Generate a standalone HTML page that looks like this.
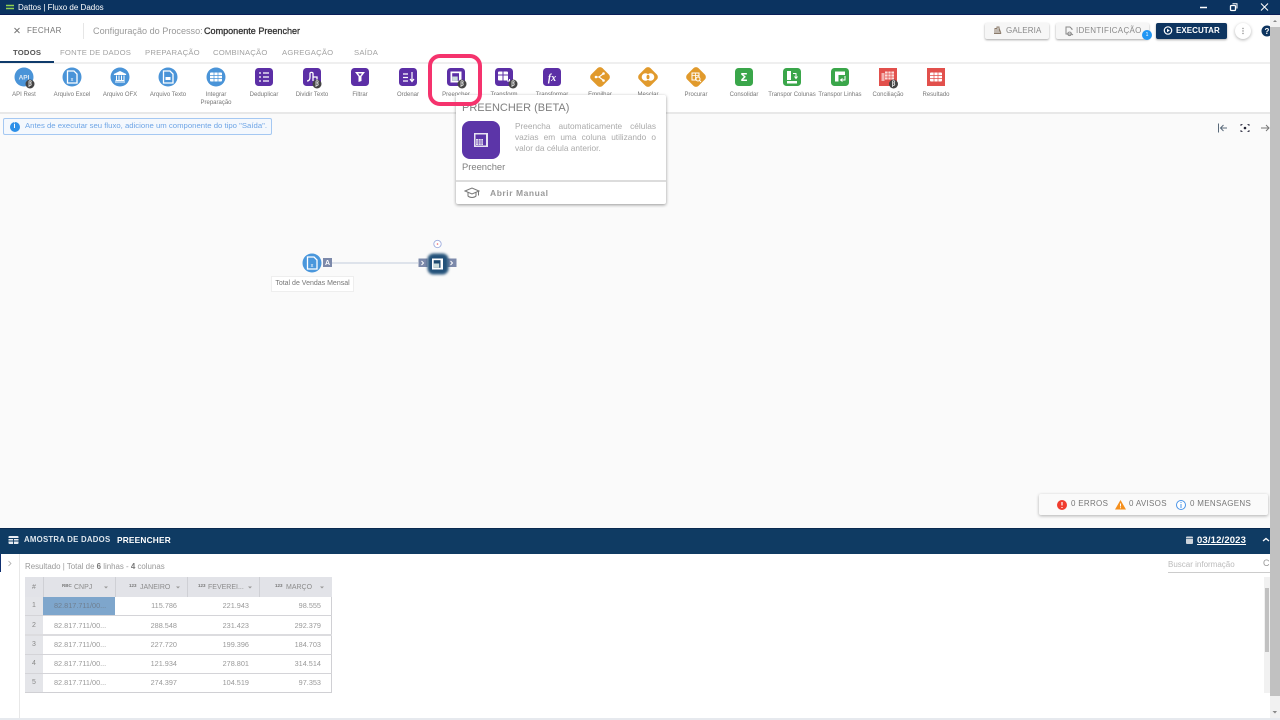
<!DOCTYPE html>
<html lang="pt"><head><meta charset="utf-8"><title>Dattos | Fluxo de Dados</title>
<style>
*{box-sizing:border-box}
html,body{margin:0;padding:0;width:1280px;height:720px;overflow:hidden;background:#fff;font-family:"Liberation Sans",sans-serif}
body{filter:blur(.3px)}
.a{position:absolute}
.t{position:absolute;white-space:nowrap;line-height:1}
.l{position:absolute;width:60px;text-align:center;font-size:6px;line-height:8px;color:#777;top:90.5px}
.tab{position:absolute;top:48px;font-size:7.7px;line-height:9px;letter-spacing:.2px;color:#a2a2a2;white-space:nowrap}
.btn{position:absolute;top:23px;height:16px;background:#f6f6f6;border-radius:2px;box-shadow:0 1px 2px rgba(0,0,0,.35);font-size:8px;line-height:16px;letter-spacing:.1px;color:#888;white-space:nowrap}
.r{text-align:right}
</style></head><body>
<div class="a" style="left:0;top:0;width:1280px;height:15px;background:#0b3360;border-bottom:1px solid #0a1e57"></div>
<div class="t" style="left:18px;top:3px;font-size:8px;line-height:10px;color:#fff">Dattos | Fluxo de Dados</div>

<div class="a" style="left:0;top:113px;width:1270px;height:415px;background:#fafafa"></div>
<div class="a" style="left:0;top:62px;width:1270px;height:2px;background:#efefef"></div>
<div class="a" style="left:0;top:61px;width:54px;height:2px;background:#0f3b6b"></div>
<div class="a" style="left:0;top:112px;width:1270px;height:2px;background:#e8e8e8"></div>

<div class="t" style="left:27px;top:27px;font-size:8px;letter-spacing:.3px;color:#777">FECHAR</div>
<div class="a" style="left:83px;top:23px;width:1px;height:16px;background:#e6e6e6"></div>
<div class="t" style="left:93px;top:26.500px;font-size:9.100px;color:#999">Configuração do Processo:</div>
<div class="t" style="left:204px;top:26.500px;font-size:9.050px;color:#333;-webkit-text-stroke:.3px #333">Componente Preencher</div>

<div class="tab" style="left:13px;color:#555;font-weight:bold">TODOS</div>
<div class="tab" style="left:60px">FONTE DE DADOS</div>
<div class="tab" style="left:145px">PREPARAÇÃO</div>
<div class="tab" style="left:213px">COMBINAÇÃO</div>
<div class="tab" style="left:282px">AGREGAÇÃO</div>
<div class="tab" style="left:354px">SAÍDA</div>

<div class="btn" style="left:985px;width:64px;padding-left:21px">GALERIA</div>
<div class="btn" style="left:1056px;width:93px;padding-left:20px;letter-spacing:.3px">IDENTIFICAÇÃO</div>
<div class="btn" style="left:1156px;width:71px;padding-left:20px;background:#0e3560;color:#fff;font-weight:bold;letter-spacing:.05px">EXECUTAR</div>
<div class="a" style="left:1235px;top:23px;width:16px;height:16px;border-radius:50%;background:#fff;box-shadow:0 1px 3px rgba(0,0,0,.3)"></div>
<div class="a" style="left:1142px;top:30px;width:10px;height:10px;border-radius:50%;background:#2196f3;color:#fff;font-size:5px;line-height:10px;text-align:center">1</div>

<div class="l" style="left:-6px">API Rest</div>
<div class="l" style="left:42px">Arquivo Excel</div>
<div class="l" style="left:90px">Arquivo OFX</div>
<div class="l" style="left:138px">Arquivo Texto</div>
<div class="l" style="left:186px">Integrar<br>Preparação</div>
<div class="l" style="left:234px">Deduplicar</div>
<div class="l" style="left:282px">Dividir Texto</div>
<div class="l" style="left:330px">Filtrar</div>
<div class="l" style="left:378px">Ordenar</div>
<div class="l" style="left:426px">Preencher</div>
<div class="l" style="left:474px">Transform</div>
<div class="l" style="left:522px">Transformar</div>
<div class="l" style="left:570px">Empilhar</div>
<div class="l" style="left:618px">Mesclar</div>
<div class="l" style="left:666px">Procurar</div>
<div class="l" style="left:714px">Consolidar</div>
<div class="l" style="left:762px">Transpor Colunas</div>
<div class="l" style="left:810px">Transpor Linhas</div>
<div class="l" style="left:858px">Conciliação</div>
<div class="l" style="left:906px">Resultado</div>

<svg class="a" style="left:0;top:0" width="1280" height="720" viewBox="0 0 1280 720">
<defs>
<g id="beta"><circle r="4.500" fill="#444"/><path d="M-1 3V-2.500C-1-3.600 1.200-3.600 1.200-2.200C1.200-1.300.2-1.200-.2-1.100C1.500-1 1.800 1.200 0 1.400H-1" fill="none" stroke="#ddd" stroke-width=".9"/></g>
<g id="doc"><path d="M-4.500-6H2L5-3V6H-4.500Z" fill="none" stroke="#fff" stroke-width="1.300"/></g>
<g id="grid"><rect x="-6" y="-4.500" width="12" height="9" rx="1" fill="#fff"/><path d="M-6-1.500H6M-6 1.500H6M-2-4.500V4.500M2-4.500V4.500" stroke="currentColor" stroke-width=".7"/></g>
<g id="fill"><rect x="-5.500" y="-5.500" width="11" height="11" fill="#fff"/><rect x="-3.800" y="-3.800" width="6.800" height="7.600" fill="currentColor"/><rect x="-3.800" y="-.5" width="5.500" height="4.300" fill="#cdd"/></g>
</defs>
<!-- title bar -->
<path d="M6 5.500H14M6 8.500H14" stroke="#8fd14f" stroke-width="1.500"/>
<path d="M1200 7.500H1207" stroke="#fff" stroke-width="1.500"/>
<rect x="1230.500" y="5.500" width="5" height="5" rx="1" fill="none" stroke="#fff" stroke-width="1.300"/><path d="M1232.500 3.800H1237V8.500" fill="none" stroke="#fff"/>
<path d="M1261 3.500L1268 10.500M1268 3.500L1261 10.500" stroke="#fff" stroke-width="1"/>
<path d="M14.500 28L19.500 33M19.500 28L14.500 33" stroke="#777" stroke-width="1"/>
<!-- buttons icons -->
<path d="M995 33.500V28.500H997V33.500M997 33.500V27H999V33.500M999 28L1001 33.500M994 33.500H1001" fill="none" stroke="#8a7a6a" stroke-width="1"/>
<path d="M1071 34H1066V27H1070L1072 29V30M1069.500 32a1.800 1.800 0 1 0 .1 0M1071 33.500L1073 35" fill="none" stroke="#888" stroke-width="1"/>
<circle cx="1168" cy="30.500" r="3.700" fill="none" stroke="#fff" stroke-width="1.200"/><path d="M1167 28.800L1169.800 30.500L1167 32.200Z" fill="#fff"/>
<circle cx="1243" cy="28.500" r=".7" fill="#888"/><circle cx="1243" cy="31" r=".7" fill="#888"/><circle cx="1243" cy="33.500" r=".7" fill="#888"/>
<circle cx="1267" cy="31" r="5.500" fill="#0e3560"/><text x="1267" y="34" font-size="8" font-weight="bold" fill="#fff" text-anchor="middle" font-family="Liberation Sans">?</text>

<!-- blue round icons -->
<g fill="#4a94d8">
<circle cx="24" cy="77" r="9.500"/><circle cx="72" cy="77" r="9.500"/><circle cx="120" cy="77" r="9.500"/><circle cx="168" cy="77" r="9.500"/><circle cx="216" cy="77" r="9.500"/>
</g>
<text x="24" y="79.500" font-size="6.500" font-weight="bold" fill="#dfeaf5" text-anchor="middle" font-family="Liberation Sans">API</text>
<use href="#doc" x="72" y="77"/><text x="72" y="81" font-size="5.500" fill="#fff" text-anchor="middle" font-family="Liberation Sans">x</text>
<path d="M114 74.500L120 71.500L126 74.500ZM115 82H125M115.500 80.500H124.500M116.500 75.500V80M119 75.500V80M121.500 75.500V80M124 75.500V80" fill="#fff" stroke="#fff" stroke-width="1"/>
<use href="#doc" x="168" y="77"/><rect x="165.500" y="77" width="5" height="3" fill="#fff"/>
<use href="#grid" x="216" y="77" color="#4a94d8"/>
<!-- purple -->
<g fill="#5c2fa6">
<rect x="255" y="68" width="18" height="18" rx="3.500"/><rect x="303" y="68" width="18" height="18" rx="3.500"/><rect x="351" y="68" width="18" height="18" rx="3.500"/><rect x="399" y="68" width="18" height="18" rx="3.500"/><rect x="447" y="68" width="18" height="18" rx="3.500"/><rect x="495" y="68" width="18" height="18" rx="3.500"/><rect x="543" y="68" width="18" height="18" rx="3.500"/>
</g>
<path d="M259 73H261M263 73H269M259 77H261M263 77H269M259 81H261M263 81H269" stroke="#fff" stroke-width="1.300"/>
<path d="M307 81C309 81 310 80 310 77V73.500C310 72 313 72 313 73.500V81M313 77H317V81" fill="none" stroke="#fff" stroke-width="1.300"/>
<path d="M355 72H365L361.500 76.500V81L358.500 82V76.500Z" fill="#fff"/><path d="M358 73.500H362L360 76Z" fill="#5c2fa6"/>
<path d="M403 74H408M403 77.500H408M403 81H408M412 72V81M410 79L412 81.500L414 79" fill="none" stroke="#fff" stroke-width="1.200"/>
<use href="#fill" x="456" y="77" color="#5c2fa6"/>
<g transform="translate(504,76)"><rect x="-6" y="-4.500" width="10" height="9" rx="1" fill="#fff"/><path d="M-6-1H4M-1-4.500V4.500" stroke="#5c2fa6"/><path d="M3 5H8M5.500 3V7" stroke="#fff"/></g>
<text x="552" y="81" font-size="10" font-style="italic" font-weight="bold" fill="#fff" text-anchor="middle" font-family="Liberation Serif">fx</text>
<use href="#beta" x="30" y="84"/><use href="#beta" x="317" y="84"/><use href="#beta" x="462" y="84"/><use href="#beta" x="513" y="84"/>
<!-- orange -->
<g fill="#e19a2c">
<rect x="592" y="69" width="16" height="16" rx="3.500" transform="rotate(45 600 77)"/><rect x="640" y="69" width="16" height="16" rx="3.500" transform="rotate(45 648 77)"/><rect x="688" y="69" width="16" height="16" rx="3.500" transform="rotate(45 696 77)"/>
</g>
<path d="M596 77H599L603 74M599 77L603 80" fill="none" stroke="#fff" stroke-width="1.100"/><circle cx="596" cy="77" r="1.300" fill="#fff"/><circle cx="603.500" cy="73.500" r="1.300" fill="#fff"/><circle cx="603.500" cy="80.500" r="1.300" fill="#fff"/>
<circle cx="645.500" cy="77" r="3.800" fill="#fff"/><circle cx="650.500" cy="77" r="3.800" fill="#fff"/><ellipse cx="648" cy="77" rx="1.500" ry="2.300" fill="#e19a2c"/>
<rect x="692" y="73" width="7" height="7" fill="none" stroke="#fff"/><path d="M692 75.500H699M695.500 73V80" stroke="#fff" stroke-width=".8"/><circle cx="698" cy="79" r="2" fill="#e19a2c" stroke="#fff"/><path d="M699.500 80.500L701 82" stroke="#fff"/>
<!-- green -->
<g fill="#3aa64a">
<rect x="735" y="68" width="18" height="18" rx="3.500"/><rect x="783" y="68" width="18" height="18" rx="3.500"/><rect x="831" y="68" width="18" height="18" rx="3.500"/>
</g>
<text x="744" y="81" font-size="11" font-weight="bold" fill="#fff" text-anchor="middle" font-family="DejaVu Sans">Σ</text>
<rect x="787" y="71" width="4" height="9" fill="#fff"/><rect x="787" y="81" width="10" height="2.500" fill="#fff"/><path d="M793 73.500H796V78M794.500 76.500L796 78.500L797.500 76.500" fill="none" stroke="#fff"/>
<rect x="835" y="71.500" width="10" height="3.500" fill="#fff"/><rect x="835" y="71.500" width="3.500" height="10" fill="#fff"/><path d="M845 76V80H841M842.500 78.500L840.500 80L842.500 81.500" fill="none" stroke="#fff"/>
<!-- red -->
<g fill="#e2504c">
<rect x="879" y="68" width="18" height="18"/><rect x="927" y="68" width="18" height="18"/>
</g>
<rect x="881.500" y="73" width="3" height="8" fill="#f4b4b2"/>
<g transform="translate(889,76)"><rect x="-4" y="-4.500" width="9" height="8" fill="#fbdcdb"/><path d="M-4-2H5M-4 1H5M-1-4.500V3.500M2-4.500V3.500" stroke="#e2504c" stroke-width=".7"/></g>
<use href="#grid" x="936" y="77" color="#e2504c"/>
<use href="#beta" x="893.500" y="84"/>

<!-- canvas controls -->
<path d="M1218.500 123.500V132.500M1227 128H1220.500M1223.500 125L1220.500 128L1223.500 131" fill="none" stroke="#5a6a7a" stroke-width="1"/>
<path d="M1241 126V124.500H1242.500M1247.500 124.500H1249V126M1249 130V131.500H1247.500M1242.500 131.500H1241V130" fill="none" stroke="#445" stroke-width="1"/><circle cx="1245" cy="128" r="1.300" fill="#223"/>
<path d="M1261 128H1269M1266 125L1269 128L1266 131" fill="none" stroke="#777" stroke-width="1"/>

<!-- flow -->
<path d="M332 263H418" stroke="#d5dbe6" stroke-width="1.500"/>
<circle cx="312" cy="263" r="9.500" fill="#4a97dc"/>
<use href="#doc" x="312" y="263"/><text x="312" y="267" font-size="5.500" fill="#fff" text-anchor="middle" font-family="Liberation Sans">x</text>
<rect x="323" y="258" width="9" height="9" fill="#7c89aa"/><text x="327.500" y="265" font-size="7" font-weight="bold" fill="#fff" text-anchor="middle" font-family="Liberation Sans">A</text>
<rect x="418.500" y="258.500" width="9" height="8.500" fill="#7c89aa"/><path d="M421.500 261L423.500 263L421.500 265" fill="none" stroke="#fff"/>
<rect x="447.500" y="258.500" width="9" height="8.500" fill="#7c89aa"/><path d="M450.500 261L452.500 263L450.500 265" fill="none" stroke="#fff"/>
<rect x="427.500" y="253.500" width="21" height="21" rx="6" fill="#24527a" style="filter:blur(1.200px)"/>
<use href="#fill" x="437.500" y="264" color="#1e4a70"/>
<circle cx="437.500" cy="244" r="3.700" fill="#fff" stroke="#9fadde" stroke-width=".9"/><circle cx="437.500" cy="244" r=".8" fill="#e66"/>
</svg>

<div class="a" style="left:3px;top:118px;width:269px;height:17px;background:#f4f8fd;border:1px solid #a5c8f2;border-radius:2px"></div>
<div class="a" style="left:9.500px;top:121.500px;width:10px;height:10px;border-radius:50%;background:#2c8fe8;color:#fff;font:bold 7px/10px 'Liberation Sans';text-align:center">i</div>
<div class="t" style="left:25px;top:122px;font-size:7.750px;color:#6ea5e6">Antes de executar seu fluxo, adicione um componente do tipo "Saída".</div>

<div class="a" style="left:271px;top:276px;width:83px;height:16px;background:#fff;border:1px solid #eee"></div>
<div class="t" style="left:271px;width:83px;text-align:center;top:280px;font-size:7px;color:#777">Total de Vendas Mensal</div>

<!-- popup -->
<div class="a" style="left:456px;top:95px;width:210px;height:109px;background:#fff;border-radius:2px;box-shadow:0 1px 3px rgba(0,0,0,.4)"></div>
<div class="t" style="left:462px;top:103px;font-size:11px;color:#808080">PREENCHER (BETA)</div>
<div class="a" style="left:462px;top:121px;width:38px;height:38px;border-radius:8px;background:#5c35a8"></div>
<svg class="a" style="left:472px;top:130.500px" width="18" height="18" viewBox="0 0 18 18"><rect x="2" y="2" width="14" height="14" fill="#e8e4f2"/><rect x="3.500" y="3.500" width="10.500" height="11" fill="#5c35a8"/><rect x="4" y="8" width="7" height="6" fill="#e0dcec"/><path d="M4 10H11M4 12H11M6.500 8V14M9 8V14" stroke="#5c35a8" stroke-width=".5"/></svg>
<div class="t" style="left:462px;top:162px;font-size:9.400px;color:#808080">Preencher</div>
<div class="a" style="left:515px;top:121px;width:141px;font-size:8.300px;line-height:11px;color:#aaa;text-align:justify">Preencha automaticamente células vazias em uma coluna utilizando o valor da célula anterior.</div>
<div class="a" style="left:456px;top:180px;width:210px;height:1.500px;background:#dcdcdc"></div>
<svg class="a" style="left:464px;top:186px" width="16" height="14" viewBox="0 0 16 14"><path d="M1 5L8 2L15 5L8 8ZM4 6.500V10C6 12 10 12 12 10V6.500M14.500 5.500V9.500" fill="none" stroke="#777" stroke-width="1"/></svg>
<div class="t" style="left:490px;top:188.500px;font-size:8.500px;letter-spacing:.55px;color:#888;font-weight:bold;opacity:.85">Abrir Manual</div>
<div class="a" style="left:428px;top:54px;width:54px;height:52px;border:4px solid #f5336d;border-radius:12px"></div>

<!-- status -->
<div class="a" style="left:1039px;top:494px;width:229px;height:21px;background:#fafafa;border-radius:2px;box-shadow:0 1px 3px rgba(0,0,0,.3)"></div>
<div class="t" style="left:1071px;top:500px;font-size:8px;letter-spacing:.3px;color:#777">0 ERROS</div>
<div class="t" style="left:1129px;top:500px;font-size:8px;letter-spacing:.3px;color:#777">0 AVISOS</div>
<div class="t" style="left:1190px;top:500px;font-size:8px;letter-spacing:.3px;color:#777">0 MENSAGENS</div>
<svg class="a" style="left:1050px;top:495px" width="145" height="20" viewBox="0 0 145 20"><circle cx="12" cy="10" r="5" fill="#f03c2e"/><path d="M12 7V10.500M12 12V13" stroke="#fff" stroke-width="1.200"/><path d="M70.500 5L76 14.500H65Z" fill="#f5901e"/><path d="M70.500 8.500V11.500M70.500 12.300V13.300" stroke="#fff"/><circle cx="131" cy="10" r="4.500" fill="#fff" stroke="#4a94e8" stroke-width="1"/><path d="M131 9V13M131 7V8" stroke="#4a94e8"/></svg>

<!-- bottom panel -->
<div class="a" style="left:0;top:528px;width:1270px;height:26px;background:#0f3b63;border-top:1px solid #0a2a50"></div>
<svg class="a" style="left:8px;top:535px" width="11" height="10" viewBox="0 0 11 10"><rect x=".5" y="1" width="10" height="8" rx="1" fill="#e8edf3"/><path d="M.5 3.500H10.500M.5 6H10.500M5.500 3.500V9" stroke="#0f3b63" stroke-width=".9"/></svg>
<div class="t" style="left:24px;top:536px;font-size:7.800px;font-weight:bold;letter-spacing:.25px;color:#dfe7ee">AMOSTRA DE DADOS</div>
<div class="t" style="left:117px;top:535.500px;font-size:8.300px;font-weight:bold;letter-spacing:.2px;color:#fff">PREENCHER</div>
<svg class="a" style="left:1185px;top:535px" width="9" height="10" viewBox="0 0 9 10"><rect x="1" y="1.500" width="7" height="7.500" rx="1" fill="#ccd3db"/><path d="M1 3.500H8" stroke="#0f3b63" stroke-width=".6"/></svg>
<div class="t" style="left:1197px;top:535.500px;font-size:9.500px;font-weight:bold;letter-spacing:.15px;color:#fff;text-decoration:underline">03/12/2023</div>
<svg class="a" style="left:1262px;top:536px" width="8" height="8" viewBox="0 0 8 8"><path d="M1 5L4 2.500L7 5" fill="none" stroke="#fff" stroke-width="1.300"/></svg>

<div class="a" style="left:19px;top:554px;width:1px;height:165px;background:#e8e8e8"></div>
<div class="a" style="left:0;top:554px;width:1px;height:18px;background:#0f2f70"></div>
<svg class="a" style="left:7px;top:560px" width="6" height="7" viewBox="0 0 6 7"><path d="M1.500 1L4 3.500L1.500 6" fill="none" stroke="#aaa" stroke-width=".8"/></svg>

<div class="t" style="left:25px;top:562.500px;font-size:7.900px;color:#999">Resultado | Total de <b style="color:#777">6</b> linhas - <b style="color:#777">4</b> colunas</div>
<div class="t" style="left:1168px;top:561px;font-size:8px;color:#bbb">Buscar informação</div>
<div class="t" style="left:1263px;top:559px;font-size:9px;color:#999">C</div>
<div class="a" style="left:1168px;top:572px;width:102px;height:1px;background:#ccc"></div>

<!-- table -->
<div class="a" style="left:25px;top:577px;width:307px;height:116px;background:#fff;border:1px solid #d0d0d4"></div>
<div class="a" style="left:25px;top:577px;width:18px;height:116px;background:#e4e5e9"></div>
<div class="a" style="left:25px;top:577px;width:307px;height:20px;background:#e2e3e8"></div>
<div class="a" style="left:43px;top:597px;width:72px;height:19px;background:#7ea6cc"></div>
<div class="a" style="left:43px;top:577px;width:1px;height:20px;background:#cfd0d5"></div>
<div class="a" style="left:115px;top:577px;width:1px;height:20px;background:#cfd0d5"></div>
<div class="a" style="left:187px;top:577px;width:1px;height:20px;background:#cfd0d5"></div>
<div class="a" style="left:259px;top:577px;width:1px;height:20px;background:#cfd0d5"></div>
<div class="a" style="left:25px;top:615px;width:307px;height:1px;background:#d4d4d8"></div>
<div class="a" style="left:25px;top:634px;width:307px;height:2px;background:#dcdcdf"></div>
<div class="a" style="left:25px;top:654px;width:307px;height:1px;background:#d4d4d8"></div>
<div class="a" style="left:25px;top:673px;width:307px;height:1px;background:#d4d4d8"></div>
<div class="a" style="left:25px;top:692px;width:307px;height:1px;background:#d0d0d4"></div>

<div class="t" style="left:25px;width:18px;text-align:center;top:584px;font-size:7px;color:#888">#</div>
<div class="t" style="left:62px;top:584px;font-size:4.500px;font-weight:bold;color:#777">RBC</div><div class="t" style="left:74px;top:584px;font-size:7px;color:#8c8c8c">CNPJ</div>
<div class="t" style="left:129px;top:584px;font-size:4.500px;font-weight:bold;color:#777">123</div><div class="t" style="left:140px;top:584px;font-size:7px;color:#8c8c8c">JANEIRO</div>
<div class="t" style="left:198px;top:584px;font-size:4.500px;font-weight:bold;color:#777">123</div><div class="t" style="left:208px;top:584px;font-size:7px;color:#8c8c8c">FEVEREI...</div>
<div class="t" style="left:275px;top:584px;font-size:4.500px;font-weight:bold;color:#777">123</div><div class="t" style="left:286px;top:584px;font-size:7px;color:#8c8c8c">MARÇO</div>
<svg class="a" style="left:0;top:579.500px" width="340" height="14" viewBox="0 0 340 14"><path d="M104 6.500H108L106 8.500ZM176 6.500H180L178 8.500ZM248 6.500H252L250 8.500ZM320 6.500H324L322 8.500Z" fill="#999"/></svg>

<div class="t" style="left:25px;width:18px;text-align:center;top:602px;font-size:7px;color:#888">1</div>
<div class="t" style="left:25px;width:18px;text-align:center;top:621.500px;font-size:7px;color:#888">2</div>
<div class="t" style="left:25px;width:18px;text-align:center;top:641px;font-size:7px;color:#888">3</div>
<div class="t" style="left:25px;width:18px;text-align:center;top:660px;font-size:7px;color:#888">4</div>
<div class="t" style="left:25px;width:18px;text-align:center;top:679px;font-size:7px;color:#888">5</div>

<div class="t" style="left:54px;top:602px;font-size:7.300px;color:#6f7f90">82.817.711/00...</div>
<div class="t" style="left:54px;top:621.500px;font-size:7.300px;color:#999">82.817.711/00...</div>
<div class="t" style="left:54px;top:641px;font-size:7.300px;color:#999">82.817.711/00...</div>
<div class="t" style="left:54px;top:660px;font-size:7.300px;color:#999">82.817.711/00...</div>
<div class="t" style="left:54px;top:679px;font-size:7.300px;color:#999">82.817.711/00...</div>

<div class="t r" style="left:117px;width:60px;top:602px;font-size:7.300px;color:#999">115.786</div>
<div class="t r" style="left:189px;width:60px;top:602px;font-size:7.300px;color:#999">221.943</div>
<div class="t r" style="left:261px;width:60px;top:602px;font-size:7.300px;color:#999">98.555</div>
<div class="t r" style="left:117px;width:60px;top:621.500px;font-size:7.300px;color:#999">288.548</div>
<div class="t r" style="left:189px;width:60px;top:621.500px;font-size:7.300px;color:#999">231.423</div>
<div class="t r" style="left:261px;width:60px;top:621.500px;font-size:7.300px;color:#999">292.379</div>
<div class="t r" style="left:117px;width:60px;top:641px;font-size:7.300px;color:#999">227.720</div>
<div class="t r" style="left:189px;width:60px;top:641px;font-size:7.300px;color:#999">199.396</div>
<div class="t r" style="left:261px;width:60px;top:641px;font-size:7.300px;color:#999">184.703</div>
<div class="t r" style="left:117px;width:60px;top:660px;font-size:7.300px;color:#999">121.934</div>
<div class="t r" style="left:189px;width:60px;top:660px;font-size:7.300px;color:#999">278.801</div>
<div class="t r" style="left:261px;width:60px;top:660px;font-size:7.300px;color:#999">314.514</div>
<div class="t r" style="left:117px;width:60px;top:679px;font-size:7.300px;color:#999">274.397</div>
<div class="t r" style="left:189px;width:60px;top:679px;font-size:7.300px;color:#999">104.519</div>
<div class="t r" style="left:261px;width:60px;top:679px;font-size:7.300px;color:#999">97.353</div>

<!-- scrollbars -->
<div class="a" style="left:1264px;top:577px;width:6px;height:116px;background:#f1f1f1"></div>
<div class="a" style="left:1265px;top:588px;width:4px;height:64px;background:#c1c1c1"></div>
<div class="a" style="left:1270px;top:15px;width:10px;height:705px;background:#f1f1f1"></div>
<div class="a" style="left:1270px;top:27px;width:10px;height:669px;background:#c1c1c1"></div>
<svg class="a" style="left:1270px;top:15px" width="10" height="705" viewBox="0 0 10 705"><path d="M3 7L5 5L7 7ZM2.500 696H7L5 698.500Z" fill="#888"/></svg>
<div class="a" style="left:0;top:718px;width:1280px;height:2px;background:#e6e9ee"></div>
</body></html>
